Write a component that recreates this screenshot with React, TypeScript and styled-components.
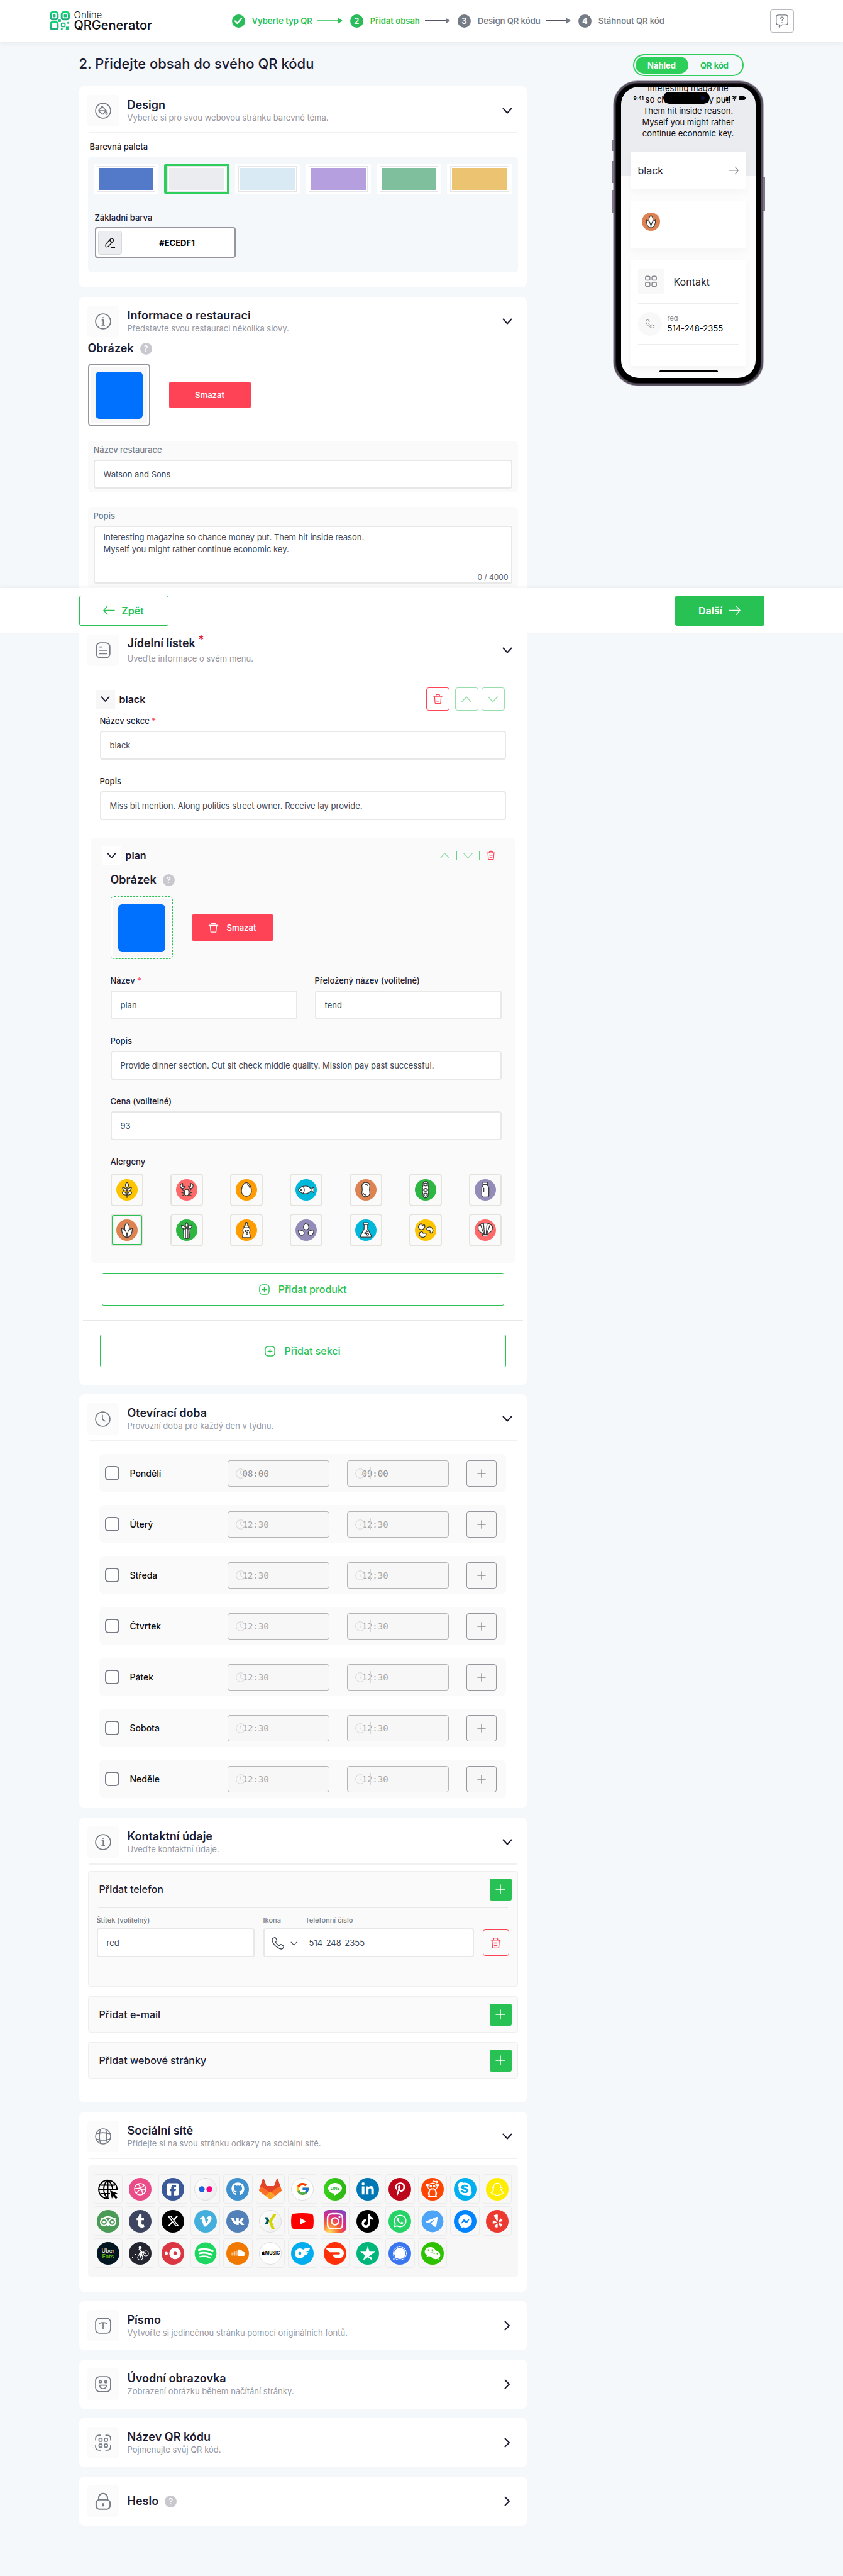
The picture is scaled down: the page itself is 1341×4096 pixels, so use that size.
import React, { ReactNode, useId } from 'react';
import styled, { createGlobalStyle, css } from 'styled-components';
import {
  FaDribbble, FaSquareFacebook, FaGithub, FaLinkedinIn, FaPinterestP, FaRedditAlien, FaSkype,
  FaSnapchat, FaTumblr, FaXTwitter, FaVimeoV, FaInstagram, FaTiktok, FaWhatsapp,
  FaTelegram, FaFacebookMessenger, FaYelp, FaSpotify, FaSoundcloud, FaApple, FaWeixin,
} from 'react-icons/fa6';
import { FaVk } from 'react-icons/fa';
import { FcGoogle } from 'react-icons/fc';
import { SiTripadvisor, SiDoordash, SiTrustpilot, SiOnlyfans, SiSignal } from 'react-icons/si';

const c = {
  page: '#f4f8fb', ink: '#1c1b32', text: '#3f4654', grey: '#767c85', soft: '#97979f',
  line: '#e8e8e9', panel: '#fafafa', green: '#28c254', bright: '#2ccf59', red: '#ff4356',
};

const Global = createGlobalStyle`
  *, *::before, *::after { box-sizing: border-box; }
  body { margin: 0; background: ${c.page}; color: ${c.ink}; font-family: Inter, "Noto Sans", sans-serif; font-size: 13px; }
  button, input, textarea, select { font: inherit; color: inherit; margin: 0; }
  button { cursor: pointer; padding: 0; }
  h1, h2, h3, p { margin: 0; }
`;

/* ---------- header ---------- */
const Page = styled.div`position: relative;`;
const Header = styled.header`
  background: #fff;
  border-bottom: 1px solid #e4e5e7;
  box-shadow: 0 2px 8px rgba(0, 0, 0, 0.06);
`;
const HeaderInner = styled.div`
  max-width: 1184px;
  height: 66px;
  margin: 0 auto;
  display: flex;
  align-items: center;
`;
const Logo = styled.a`
  display: flex;
  align-items: center;
  gap: 7px;
  width: 290px;
  color: #111;
  text-decoration: none;
`;
const LogoText = styled.span`
  display: flex;
  flex-direction: column;
  font-size: 20px;
  font-weight: 500;
  line-height: 18px;
  small { font-size: 15px; font-weight: 300; line-height: 14px; }
`;
const Steps = styled.ol`
  flex: 1;
  display: flex;
  align-items: center;
  gap: 12px;
  list-style: none;
  margin: 0;
  padding: 0;
`;
const Step = styled.li<{ $on: boolean }>`
  display: flex;
  align-items: center;
  font-size: 13px;
  font-weight: 600;
  color: ${p => (p.$on ? c.green : c.grey)};
  svg { margin-left: 8px; }
`;
const StepDot = styled.span<{ $on: boolean }>`
  width: 21px;
  height: 21px;
  margin-right: 11px;
  border-radius: 50%;
  display: grid;
  place-items: center;
  background: ${p => (p.$on ? '#2abb5b' : c.grey)};
  color: #fff;
  svg { margin: 0; }
`;
const HelpButton = styled.button`
  width: 38px;
  height: 37px;
  border: 1px solid #b9b9bf;
  border-radius: 4px;
  background: #fff;
  display: grid;
  place-items: center;
  color: ${c.grey};
`;

/* ---------- layout ---------- */
const Main = styled.main`
  max-width: 1090px;
  margin: 0 auto;
  padding: 19px 0 80px;
  display: flex;
  justify-content: space-between;
`;
const Column = styled.div`width: 712px;`;
const Title = styled.h1`
  font-size: 22px;
  font-weight: 500;
  line-height: 28px;
  margin: 1px 0 22px;
`;
const Stack = styled.div`display: flex; flex-direction: column; gap: 15px;`;
const Card = styled.section<{ $bottom?: number }>`
  background: #fff;
  border-radius: 8px;
  padding: 14px 0 ${p => p.$bottom ?? 14}px;
`;
const Head = styled.div`
  display: flex;
  align-items: center;
  gap: 14px;
  padding: 0 23px 0 13px;
`;
const IconBox = styled.span`
  width: 50px;
  height: 50px;
  border-radius: 5px;
  background: #fbfbfb;
  display: grid;
  place-items: center;
  color: ${c.grey};
`;
const HeadText = styled.div<{ $loose?: boolean }>`
  flex: 1;
  display: flex;
  flex-direction: column;
  gap: ${p => (p.$loose ? 4 : 0)}px;
`;
const HeadTitle = styled.h2`
  font-size: 18px;
  font-weight: 600;
  line-height: 22px;
  display: flex;
  align-items: center;
  gap: 10px;
  sup { color: #e01522; font-size: 18px; line-height: 12px; align-self: flex-start; margin-left: -6px; }
`;
const HeadSub = styled.p`color: ${c.soft}; font-size: 13px; line-height: 18px;`;
const FoldButton = styled.button`
  border: 0;
  background: none;
  display: grid;
  place-items: center;
  width: 16px;
  height: 20px;
`;
const Rule = styled.hr<{ $thin?: boolean }>`
  border: 0;
  height: ${p => (p.$thin ? 1 : 2)}px;
  background: ${p => (p.$thin ? c.line : '#f1f1f2')};
  margin: ${p => (p.$thin ? '9px 6px 24px' : '9px 15px 0')};
`;

/* ---------- fields ---------- */
const Label = styled.label<{ $grey?: boolean }>`
  display: block;
  font-size: 13px;
  font-weight: 500;
  line-height: 16px;
  color: ${p => (p.$grey ? c.grey : c.ink)};
  i { color: ${c.red}; font-style: normal; }
`;
const boxed = css`
  width: 100%;
  border: 2px solid ${c.line};
  border-radius: 4px;
  background: #fff;
  color: ${c.text};
  font-size: 13px;
  outline: none;
`;
const Input = styled.input`${boxed} height: 46px; padding: 0 14px;`;
const Area = styled.textarea`
  ${boxed}
  display: block;
  height: 92px;
  padding: 7px 14px;
  line-height: 19px;
  resize: none;
`;
const FieldBox = styled.div`display: flex; flex-direction: column; gap: 8px; flex: 1;`;
const Field = ({ label, value, grey, required }: { label: string; value: string; grey?: boolean; required?: boolean }) => {
  const id = useId();
  return (
    <FieldBox>
      <Label htmlFor={id} $grey={grey}>{label}{required && <i> *</i>}</Label>
      <Input id={id} defaultValue={value} />
    </FieldBox>
  );
};

/* ---------- design card ---------- */
const Body = styled.div<{ $top: number }>`padding: ${p => p.$top}px 14px 0;`;
const PaletteTitle = styled(Label)`padding-left: 3px; margin-bottom: 8px;`;
const PalettePanel = styled.div`
  background: ${c.page};
  border-radius: 6px;
  padding: 11px 9px 23px;
`;
const Swatches = styled.div`
  display: grid;
  grid-template-columns: repeat(6, 1fr);
  gap: 9px;
  margin-bottom: 29px;
`;
const Swatch = styled.button<{ $color: string; $on?: boolean }>`
  height: 49px;
  border: ${p => (p.$on ? `4px solid ${c.bright}` : '4px solid #fff')};
  border-radius: 4px;
  background: #fff;
  padding: 0 1px;
  span {
    display: block;
    height: 41px;
    padding: 2px;
    border: 1px solid #e6e6ea;
    background: ${p => p.$color} content-box;
  }
`;
const BaseColor = styled.div`padding-left: 2px;`;
const ColorField = styled.div`
  width: 224px;
  height: 49px;
  margin-top: 7px;
  border: 2px solid #97939f;
  border-radius: 4px;
  background: #fff;
  padding: 0 3px;
  display: flex;
  align-items: center;
`;
const ColorPick = styled.button`
  width: 38px;
  height: 38px;
  border: 1px solid #d7d7dc;
  border-radius: 4px;
  background: #ecedf1;
  display: grid;
  place-items: center;
  color: #111;
`;
const ColorInput = styled.input`
  flex: 1;
  min-width: 0;
  border: 0;
  outline: 0;
  background: none;
  text-align: center;
  font-size: 13px;
  font-weight: 700;
  color: #000;
`;

/* ---------- pictures ---------- */
const PictureTitle = styled.h3`
  display: flex;
  align-items: center;
  gap: 10px;
  font-size: 18px;
  font-weight: 600;
  line-height: 24px;
`;
const Hint = styled.button`
  width: 19px;
  height: 19px;
  border: 0;
  border-radius: 50%;
  background: #c9c8ce;
  color: #fff;
  font-size: 13px;
  font-weight: 500;
  line-height: 19px;
`;
const PictureRow = styled.div<{ $top: number; $bottom: number }>`
  display: flex;
  align-items: center;
  gap: 30px;
  padding: ${p => p.$top}px 0 ${p => p.$bottom}px;
`;
const PictureBox = styled.div<{ $dashed?: boolean }>`
  width: 99px;
  height: 100px;
  border: ${p => (p.$dashed ? `1px dashed ${c.green}` : '2px solid #97939f')};
  border-radius: 6px;
  background: #f7f7f7;
  display: grid;
  place-items: center;
  box-shadow: inset 0 0 0 3px #fff;
`;
const Picture = styled.div`width: 75px; height: 75px; border-radius: 6px; background: #0070ff;`;
const DeleteButton = styled.button`
  width: 130px;
  height: 42px;
  border: 0;
  border-radius: 3px;
  background: ${c.red};
  color: #fff;
  font-size: 13px;
  font-weight: 600;
  display: flex;
  align-items: center;
  justify-content: center;
  gap: 12px;
`;
const FieldPanel = styled.div<{ $gap?: boolean }>`
  background: ${c.panel};
  border-radius: 6px;
  padding: 6px 9px;
  margin-bottom: ${p => (p.$gap ? 23 : 0)}px;
`;
const AreaWrap = styled.div`position: relative;`;
const Counter = styled.span`
  position: absolute;
  right: 6px;
  bottom: 3px;
  font-size: 12px;
  line-height: 14px;
  color: #66696f;
`;

/* ---------- menu card ---------- */
const SectionHead = styled.div<{ $inner?: boolean }>`
  display: flex;
  align-items: center;
  height: ${p => (p.$inner ? 30 : 37)}px;
  padding: ${p => (p.$inner ? '0 30px 0 18px' : '0 35px 0 26px')};
  h3 { flex: 1; font-size: 16px; font-weight: 600; margin-left: 7px; color: #200f26; }
`;
const SmallFold = styled.button<{ $white?: boolean }>`
  width: 31px;
  height: 30px;
  border: 0;
  background: ${p => (p.$white ? '#fff' : '#f7f7f7')};
  display: grid;
  place-items: center;
`;
const Square = styled.button<{ $tone: string; $gap: number; $size?: number }>`
  width: ${p => p.$size ?? 37}px;
  height: ${p => p.$size ?? 37}px;
  margin-left: ${p => p.$gap}px;
  border: 1px solid ${p => p.$tone};
  border-radius: 4px;
  background: transparent;
  color: ${p => p.$tone};
  display: grid;
  place-items: center;
`;
const MiniTools = styled.div`
  display: flex;
  align-items: center;
  gap: 9px;
  span { width: 2px; height: 14px; background: ${c.green}; opacity: 0.7; }
`;
const MiniButton = styled.button<{ $tone: string }>`
  border: 0;
  background: none;
  color: ${p => p.$tone};
  display: grid;
  place-items: center;
`;
const SectionFields = styled.div`
  padding: 8px 33px 28px;
  display: flex;
  flex-direction: column;
  gap: 26px;
`;
const Product = styled.div`
  margin: 0 19px 16px 18px;
  background: ${c.panel};
  border-radius: 6px;
  padding: 13px 0 26px;
`;
const ProductBody = styled.div`padding: 12px 21px 0 32px;`;
const ProductFields = styled.div`display: flex; flex-direction: column; gap: 26px;`;
const Pair = styled.div`display: flex; gap: 28px;`;
const Allergens = styled.fieldset`
  border: 0;
  margin: 0;
  padding: 0;
  min-width: 0;
  legend { padding: 0; margin-bottom: 11px; font-size: 13px; font-weight: 500; line-height: 16px; }
`;
const AllergenGrid = styled.div`
  display: grid;
  grid-template-columns: repeat(7, 52px);
  justify-content: space-between;
  row-gap: 12px;
`;
const AllergenTile = styled.label<{ $on?: boolean }>`
  height: 52px;
  border: 2px solid #e4e4dc;
  border-radius: 5px;
  box-shadow: ${p => (p.$on ? `inset 0 0 0 2px ${c.green}` : 'none')};
  display: grid;
  place-items: center;
  > * { grid-area: 1 / 1; }
  input { width: 34px; height: 34px; opacity: 0; }
`;
const AddButton = styled.button<{ $side: number }>`
  width: calc(100% - ${p => p.$side * 2}px);
  height: 52px;
  margin: 0 ${p => p.$side}px;
  border: 1px solid ${c.green};
  border-radius: 3px;
  background: #fff;
  color: ${c.green};
  font-size: 16px;
  font-weight: 500;
  display: flex;
  align-items: center;
  justify-content: center;
  gap: 14px;
`;
const MenuRule = styled(Rule)`margin: 23px 6px 22px;`;

/* ---------- opening hours ---------- */
const Days = styled.div`
  padding: 20px 33px 0 32px;
  display: flex;
  flex-direction: column;
  gap: 20px;
`;
const Day = styled.div`
  height: 61px;
  border-radius: 8px;
  background: ${c.panel};
  padding: 0 15px 0 9px;
  display: flex;
  align-items: center;
`;
const DayName = styled.label`
  flex: 1;
  display: flex;
  align-items: center;
  gap: 17px;
  font-size: 14px;
  font-weight: 500;
  color: #0d0d12;
`;
const Check = styled.input`
  appearance: none;
  width: 23px;
  height: 23px;
  border: 2px solid ${c.grey};
  border-radius: 6px;
  background: #fff;
`;
const TimeBox = styled.span`
  width: 162px;
  height: 42px;
  flex: none;
  position: relative;
  margin-right: 28px;
  svg { position: absolute; left: 13px; top: 13px; color: #d3d3d3; }
  &::after { content: ''; position: absolute; left: 37px; top: 11px; width: 1px; height: 19px; background: #d6d6d6; }
`;
const TimeInput = styled.input`
  width: 100%;
  height: 100%;
  padding: 0 0 0 23px;
  border: 1px solid #b5b5b8;
  border-radius: 4px;
  background: #f7f7f7;
  color: #929292;
  font: 14px "DejaVu Sans Mono", monospace;
  &::placeholder { color: #a9a9a9; opacity: 1; }
`;
const MoreButton = styled.button`
  width: 48px;
  height: 42px;
  border: 1px solid #97969c;
  border-radius: 4px;
  background: #f7f7f7;
  color: #8c8c90;
  display: grid;
  place-items: center;
`;

/* ---------- contacts ---------- */
const Contact = styled.div<{ $open?: boolean }>`
  border: 1px solid #efefef;
  border-radius: 4px;
  background: ${c.panel};
  padding: 11px 9px ${p => (p.$open ? 46 : 11)}px;
`;
const ContactList = styled.div`display: flex; flex-direction: column; gap: 15px; padding: 10px 14px 0;`;
const ContactHead = styled.div`
  display: flex;
  align-items: center;
  justify-content: space-between;
  height: 34px;
  padding-left: 8px;
  h3 { font-size: 16px; font-weight: 500; }
`;
const PlusButton = styled.button`
  width: 35px;
  height: 35px;
  border: 0;
  border-radius: 3px;
  background: ${c.green};
  color: #fff;
  display: grid;
  place-items: center;
`;
const ContactRule = styled.hr`border: 0; height: 1px; background: ${c.line}; margin: 12px 6px;`;
const ContactGrid = styled.div`
  display: grid;
  grid-template-columns: 251px 1fr 42px;
  column-gap: 14px;
  row-gap: 6px;
  align-items: center;
  padding: 0 4px;
`;
const TinyLabel = styled.label`font-size: 11px; line-height: 14px; font-weight: 500; color: ${c.grey};`;
const TinyLabels = styled.div`
  display: flex;
  grid-column: 2 / 4;
  > :first-child { width: 67px; }
`;
const PhoneField = styled.div`
  ${boxed}
  height: 46px;
  display: flex;
  align-items: center;
`;
const IconSelectWrap = styled.div`
  display: grid;
  width: 55px;
  height: 20px;
  margin: 0 6px 0 8px;
  border-right: 1px solid #dcdcdf;
  align-items: center;
  select { grid-area: 1 / 1; width: 50px; opacity: 0; }
  span { grid-area: 1 / 1; display: flex; align-items: center; justify-content: space-between; width: 42px; margin-left: 2px; }
`;
const BareInput = styled.input`border: 0; outline: 0; background: none; flex: 1; min-width: 0; padding: 0 2px;`;

/* ---------- social ---------- */
const SocialPanel = styled.div`
  margin: 10px 14px 0;
  padding: 14px 9px;
  border-radius: 4px;
  background: #f7f7f7;
  display: grid;
  grid-template-columns: repeat(13, 1fr);
  column-gap: 5px;
  row-gap: 4px;
`;
const SocialTile = styled.button`
  height: 47px;
  border: 1px solid #ececec;
  border-radius: 4px;
  background: transparent;
  display: grid;
  place-items: center;
`;
const Disc = styled.span<{ $bg: string; $outline?: boolean; $shape?: 'round' | 'square' | 'none' }>`
  width: 36px;
  height: 36px;
  border-radius: ${p => (p.$shape === 'square' ? '8px' : p.$shape === 'none' ? 0 : '50%')};
  border: ${p => (p.$outline ? '1px solid #dedede' : 'none')};
  background: ${p => p.$bg};
  color: #fff;
  display: grid;
  place-items: center;
`;
const DiscText = styled.span<{ $size: number }>`
  display: flex;
  flex-direction: column;
  font-size: ${p => p.$size}px;
  line-height: ${p => p.$size}px;
  b { font-weight: 600; color: #5fb709; }
`;
const MusicMark = styled.span`
  display: flex;
  align-items: center;
  font-size: 7px;
  font-weight: 700;
  color: #000;
`;

/* ---------- bottom bar ---------- */
const ActionBar = styled.nav`
  position: absolute;
  top: 935px;
  left: 0;
  right: 0;
  background: #fff;
  box-shadow: 0 -2px 6px rgba(0, 0, 0, 0.05);
`;
const ActionInner = styled.div`
  max-width: 1090px;
  height: 71px;
  margin: 0 auto;
  display: flex;
  align-items: center;
  justify-content: space-between;
`;
const ActionButton = styled.button<{ $solid?: boolean }>`
  width: 142px;
  height: 48px;
  border: 1px solid ${c.green};
  border-radius: 3px;
  background: ${p => (p.$solid ? c.green : '#fff')};
  color: ${p => (p.$solid ? '#fff' : c.green)};
  font-size: 16px;
  font-weight: 600;
  display: flex;
  align-items: center;
  justify-content: center;
  gap: 10px;
`;

/* ---------- preview ---------- */
const Preview = styled.aside`width: 242px; display: flex; flex-direction: column; align-items: center; gap: 8px;`;
const Toggle = styled.div`
  width: 176px;
  height: 35px;
  padding: 2px;
  border: 2px solid ${c.bright};
  border-radius: 18px;
  display: flex;
`;
const ToggleButton = styled.button<{ $on?: boolean }>`
  flex: 1;
  border: 0;
  border-radius: 15px;
  background: ${p => (p.$on ? c.bright : 'transparent')};
  color: ${p => (p.$on ? '#fff' : c.green)};
  font-size: 13px;
  font-weight: 700;
`;
const PhoneShell = styled.div`
  position: relative;
  width: 238px;
  height: 484px;
  border-radius: 38px;
  background: #000;
  border: 3px solid #57505f;
  box-shadow: inset 0 0 0 1px #26212c, 0 0 0 1px #b5afba;
  padding: 6px 9px 9px;
`;
const SideKey = styled.span<{ $y: number; $h: number; $right?: boolean }>`
  position: absolute;
  ${p => (p.$right ? 'right: -6px;' : 'left: -6px;')}
  top: ${p => p.$y}px;
  width: 3px;
  height: ${p => p.$h}px;
  background: #7d7488;
`;
const Screen = styled.div`
  position: relative;
  height: 463px;
  border-radius: 28px;
  overflow: hidden;
  background: linear-gradient(#ebecf0 142px, #fcfcfc 142px);
  color: #0b0b10;
`;
const StatusTime = styled.span`position: absolute; left: 20px; top: 13px; font-size: 8px; line-height: 10px; font-weight: 700; color: #000;`;
const StatusIcons = styled.svg`position: absolute; right: 16px; top: 14px;`;
const Island = styled.span`
  position: absolute;
  left: 67px;
  top: 8px;
  width: 74px;
  height: 19px;
  border-radius: 10px;
  background: #000;
  &::after { content: ''; position: absolute; right: 8px; top: 7px; width: 6px; height: 6px; border-radius: 50%; background: #0c1142; }
`;
const HomeBar = styled.span`position: absolute; left: 61px; bottom: 9px; width: 93px; height: 3px; border-radius: 2px; background: #000;`;
const PreviewText = styled.p`
  margin-top: -7px;
  padding-bottom: 20px;
  white-space: pre-line;
  text-align: center;
  font-size: 13px;
  line-height: 18px;
`;
const MobileCards = styled.div`display: flex; flex-direction: column; gap: 18px; padding: 0 15px;`;
const MobileCard = styled.div<{ $h: number }>`
  height: ${p => p.$h}px;
  border-radius: 3px;
  background: #fff;
  box-shadow: 0 5px 12px rgba(0, 0, 0, 0.03);
  padding: 0 12px;
  color: #1e2434;
`;
const MobileLine = styled.div<{ $h: number; $ruled?: boolean; $gap: number }>`
  height: ${p => p.$h}px;
  display: flex;
  align-items: center;
  gap: ${p => p.$gap}px;
  border-bottom: ${p => (p.$ruled ? '1px solid #ededee' : '0')};
  font-size: 16px;
`;
const MobileAction = styled.span`margin-left: auto; display: flex; color: #85858c;`;
const MobileAllergens = styled.div`display: flex; padding-left: 6px;`;
const MobileIcon = styled.span<{ $round?: boolean }>`
  width: ${p => (p.$round ? 38 : 41)}px;
  height: ${p => (p.$round ? 38 : 41)}px;
  border-radius: ${p => (p.$round ? '50%' : '4px')};
  background: #f8f8f9;
  display: grid;
  place-items: center;
  color: #85858c;
`;
const MobileContact = styled.span`
  display: flex;
  flex-direction: column;
  font-size: 13px;
  line-height: 17px;
  color: #000;
  small { font-size: 11px; line-height: 15px; color: #85858c; }
`;

/* ---------- line icons ---------- */
const Line = ({ size, box = 24, w = 1.6, children }: { size: number; box?: number; w?: number; children: ReactNode }) => (
  <svg width={size} height={size} viewBox={`0 0 ${box} ${box}`} fill="none" stroke="currentColor" strokeWidth={w} strokeLinecap="round" strokeLinejoin="round" aria-hidden="true">{children}</svg>
);
const Down = ({ size = 16, w = 2 }) => <Line size={size} w={w} box={16}><path d="M1.500 4.500 8 11.500l6.500-7" /></Line>;
const Up = ({ size = 16, w = 1.2 }) => <Line size={size} w={w} box={16}><path d="M1.500 11.500 8 4.500l6.500 7" /></Line>;
const Right = () => <Line size={16} w={2} box={16}><path d="m4.500 1.500 6.500 6.500-6.500 6.500" /></Line>;
const Arrow = ({ back = false, size = 20 }) => (
  <Line size={size} box={20} w={1.5}>{back ? <path d="M19 10H1m6-7-6 7 6 7" /> : <path d="M1 10h18m-6-7 6 7-6 7" />}</Line>
);
const Plus = ({ size = 16, w = 1.6 }) => <Line size={size} box={16} w={w}><path d="M8 1v14M1 8h14" /></Line>;
const Trash = ({ size = 17 }) => (
  <Line size={size} box={18} w={1.3}><path d="M2 4.500h14M6 4.500V2.800C6 2 6.400 1.500 7.200 1.500h3.600c.8 0 1.200.5 1.200 1.300v1.700M3.500 4.500l.8 11c.1.700.5 1 1.200 1h7c.7 0 1.100-.3 1.200-1l.8-11M7 12.500h4M6.800 9h4.400" /></Line>
);
const PlainTrash = () => <Line size={17} box={18} w={1.5}><path d="M1.500 4.500h15M6 1.500h6M3.500 4.500l1.300 11.500h8.400l1.300-11.500" /></Line>;
const PlusBox = () => <Line size={17} box={18} w={1.5}><rect x="1" y="1" width="16" height="16" rx="5" /><path d="M9 5.500v7M5.500 9h7" /></Line>;
const Clock = ({ size = 25, w = 1.6 }) => <Line size={size} w={w}><circle cx="12" cy="12" r="11" /><path d="M11.500 6v6.500l4 2.500" /></Line>;
const InfoIcon = () => <Line size={26}><circle cx="12" cy="12" r="11" /><path d="M10.500 10h1.700v7.500m-1.900 0h3.800M12 6.300v.5" /></Line>;
const PhoneIcon = ({ size = 16 }) => (
  <Line size={size} w={1.5}><path d="M6 2 3 3.500C1.500 5 2 8 4 11.500S10.500 19 15 21c3 1.300 5 .8 6-1l1-1.500c.4-.8.200-1.400-.5-2l-3.200-2.200c-.7-.5-1.500-.4-2 .2l-1 1.200c-.6.6-1.300.6-2 .1-2-1.400-3.500-3-4.700-5-.4-.8-.3-1.400.3-2l1-.9c.5-.6.6-1.200.2-1.900L8 2.400C7.500 1.700 6.800 1.600 6 2Z" /></Line>
);
const DesignIcon = () => <Line size={26} w={1.5}><circle cx="12" cy="12" r="11" /><path d="m10.500 5.500 6 6.300-4 4.700c-.6.700-1.400.7-2 .1L6 13c-.6-.6-.6-1.400 0-2l4.500-5.500v3M6 12h10M17 14c1.600 2 1.500 3.400.2 3.400S15.500 16 17 14Z" /></Line>;
const MenuIcon = () => <Line size={26}><rect x="2" y="1" width="20" height="22" rx="6" /><path d="M7 7h3M7 12h10M7 17h10" /></Line>;
const GlobeIcon = () => <Line size={26} w={1.4}><circle cx="12" cy="12" r="11" /><path d="M8 2c-2 7-2 13 0 20M16 2c2 7 2 13 0 20M2 8c7-2 13-2 20 0M2 16c7 2 13 2 20 0" /></Line>;
const FontIcon = () => <Line size={26}><rect x="1" y="1" width="22" height="22" rx="6" /><path d="M6.500 8.500c3.500-1.200 7.500-1.200 11 0M12 8v8.500" /></Line>;
const FaceIcon = () => <Line size={26}><rect x="1" y="1" width="22" height="22" rx="6" /><circle cx="8" cy="8.300" r="1.600" /><circle cx="16" cy="8.300" r="1.600" /><path d="M7.500 13.500h9c.4 0 .6.2.5.7-.5 2.600-2.400 4.300-5 4.300s-4.500-1.700-5-4.300c-.1-.5.1-.7.5-.7Z" /></Line>;
const QrIcon = () => <Line size={26}><path d="M1 8V6c0-3 2-5 5-5h2M16 1h2c3 0 5 2 5 5v2M23 16v2c0 3-2 5-5 5h-2M8 23H6c-3 0-5-2-5-5v-2" /><rect x="6" y="5.500" width="4.500" height="4.500" rx="1" /><rect x="14" y="5.500" width="4.500" height="4.500" rx="1" /><rect x="6" y="14" width="4.500" height="4.500" rx="1" /><rect x="14" y="14" width="4.500" height="4.500" rx="1" /></Line>;
const LockIcon = () => <Line size={28} w={1.7}><rect x="2.500" y="10" width="19" height="13" rx="4.500" /><path d="M6 10V7.500a6 6 0 0 1 12 0V10M12 15.500v3" /></Line>;
const StepArrow = ({ on }: { on: boolean }) => (
  <svg width="40" height="10" viewBox="0 0 40 10" aria-hidden="true">
    <path d="M0 5h33" stroke={on ? c.green : c.ink} strokeWidth="1.300" />
    <path d="M33 .5 40 5l-7 4.500Z" fill={on ? c.green : c.grey} />
  </svg>
);
const LogoMark = () => (
  <svg width="32" height="30" viewBox="0 0 34 32" aria-hidden="true">
    <defs><linearGradient id="mark" x2="0" y2="1"><stop stopColor="#12d376" /><stop offset="1" stopColor="#1fab7b" /></linearGradient></defs>
    <g fill="none" stroke="url(#mark)" strokeWidth="3.200">
      <rect x="1.600" y="1.600" width="12" height="12" rx="3.200" /><rect x="20.400" y="1.600" width="12" height="12" rx="3.200" />
      <rect x="1.600" y="18.400" width="12" height="12" rx="3.200" />
    </g>
    <g fill="#17c279">
      <rect x="5.200" y="5.200" width="4.800" height="4.800" rx="1" /><rect x="24" y="5.200" width="4.800" height="4.800" rx="1" />
      <rect x="14.500" y="14" width="4.500" height="4" /><rect x="30" y="18" width="3" height="3" /><rect x="27.500" y="26" width="5" height="5" /><rect x="19" y="28" width="3" height="3" />
    </g>
    <rect x="20" y="20" width="6" height="6" rx="1" fill="none" stroke="#17b87a" strokeWidth="2" />
  </svg>
);

/* ---------- allergen drawings ---------- */
const allergens: { name: string; bg: string; art: ReactNode }[] = [
  { name: 'Lepek', bg: '#ffc400', art: <><path d="M18 13v18" /><path d="M18 5c-4 4-3.500 7 0 9 3.500-2 4-5 0-9ZM17.500 19.500c-1-4-4-5.500-7-5 .3 3.700 2.500 5.500 7 5ZM18.500 19.500c1-4 4-5.500 7-5-.3 3.700-2.500 5.500-7 5ZM17.500 26.500c-1-4-4-5.500-7.500-5 .5 3.700 3 5.500 7.500 5ZM18.500 26.500c1-4 4-5.500 7.500-5-.5 3.700-3 5.500-7.500 5Z" /></> },
  { name: 'Korýši', bg: '#ff6969', art: <><path d="m10 16 4 5m-5 1 5 2m-4 4 4-2m12-10-4 5m5 1-5 2m4 4-4-2" fill="none" /><path d="M14.500 19c1-2.500 6-2.500 7 0v6c-1 3.500-6 3.500-7 0ZM11 7c-3.500.5-5 4-3 7 2 2.500 6 2 7-2l-3.500 1ZM25 7c3.500.5 5 4 3 7-2 2.500-6 2-7-2l3.500 1Z" /></> },
  { name: 'Vejce', bg: '#ff9d00', art: <><path d="M18 6c5 0 8.500 8 8.500 13.500S22.500 29 18 29s-8.500-4-8.500-9.500S13 6 18 6Z" /><path d="M20 9c2 1.500 3 3 3.500 5" fill="none" /></> },
  { name: 'Ryby', bg: '#00b8d9', art: <><path d="M5 18c3-5 7-6.500 12-6.500 4 0 7 2 9.500 5.500L31 13v10l-4.500-4c-2.500 3.500-5.500 5.500-9.500 5.500-5 0-9-1.500-12-6.500Z" /><path d="M13 12.500c2.500 3 2.500 8 0 11" fill="none" /><circle cx="9.500" cy="17.500" r="1" /></> },
  { name: 'Arašídy', bg: '#dd8351', art: <><path d="M18 5.500c5 0 7.500 3.500 6.500 8-.6 2.500-.6 4.500 0 7 1.200 5-1.500 9-6.500 9s-7.700-4-6.500-9c.6-2.500.6-4.500 0-7-1-4.500 1.500-8 6.500-8Z" /><path d="M17 8.500c2 0 3.500 1 4 2.500m-7 13c.7 1.500 2 2.500 4 2.500" fill="none" /></> },
  { name: 'Sója', bg: '#2db742', art: <><path d="M18 4c4 0 5 3 4 6.500 2 3 2 4.500 0 7.500 2 3 2 4.500 0 7 1 4-1 6.500-4 6.500s-5-2.500-4-6.500c-2-2.500-2-4 0-7-2-3-2-4.500 0-7.500C13 7 14 4 18 4Z" /><circle cx="18" cy="9" r="2.500" /><circle cx="18" cy="18" r="2.500" /><circle cx="18" cy="26" r="2.500" /></> },
  { name: 'Mléko', bg: '#938cb8', art: <><path d="M14 5h8v4h-8ZM14.500 9c0 3-2.500 3-2.500 6v12c0 2 1 3 3 3h6c2 0 3-1 3-3V15c0-3-2.500-3-2.500-6Z" /><path d="M15.500 15v6" /></> },
  { name: 'Ořechy', bg: '#dd8351', art: <><path d="M18 5.500c5 3.500 5.500 12 0 20-5.500-8-5-16.500 0-20Z" /><path d="M18 30c-6 .5-9.500-8-9-15.500 5.500 1.500 9 7 9 15.500ZM18 30c6 .5 9.500-8 9-15.500-5.500 1.500-9 7-9 15.500Z" /></> },
  { name: 'Celer', bg: '#2db742', art: <><path d="M12 15c1 5 1 11 1 16 3 1.500 7 1.500 10 0 0-5 0-11 1-16Z" /><path d="M16 15v16m4-16v16" /><path d="M18 5c-3 3-3 6 0 9 3-3 3-6 0-9ZM16 16c0-4-3-6-7-6 0 4 3 6 7 6ZM20 16c0-4 3-6 7-6 0 4-3 6-7 6Z" /></> },
  { name: 'Hořčice', bg: '#ff9d00', art: <><path d="M17 5h2l1.500 6h-5ZM14 11h8v3h-8ZM13.500 14c-3 3-1.500 6-.5 8-1 2-1.500 5-1.500 8.500h13c0-3.500-.5-6.500-1.500-8.500 1-2 2.500-5-.5-8Z" /><circle cx="16.500" cy="19.500" r="1" /><circle cx="20.500" cy="18.500" r="1.200" /><circle cx="19" cy="23" r="1.600" /></> },
  { name: 'Sezam', bg: '#938cb8', art: <><path d="M18 5.500c3 2.500 4.500 5.500 4.500 7.500 0 2.500-2 4.500-4.500 4.500s-4.500-2-4.500-4.500c0-2 1.500-5 4.500-7.500ZM5 18c4-.5 7 .5 8.500 2 1.500 2 1.500 4 0 5.500-2 1.500-4 1.500-6 0C6 24 5 21.500 5 18ZM31 18c-4-.5-7 .5-8.500 2-1.500 2-1.500 4 0 5.500 2 1.500 4 1.500 6 0 1.500-1.500 2.500-4 2.500-7.500Z" /></> },
  { name: 'Siřičitany', bg: '#00b8d9', art: <><path d="M15 8.500h6V16l6 11c.8 1.700.3 2.800-1.500 2.800h-15C8.700 29.800 8.200 28.700 9 27l6-11ZM14 5.500h8v3h-8Z" /><circle cx="17" cy="23" r="1" /><circle cx="21" cy="25" r="1.600" /><circle cx="19.500" cy="20" r="1" /></> },
  { name: 'Kešu', bg: '#ffc400', art: <><path d="M8 9c2-3 4-2 4 .5 1 .8 2 .5 3-.5 2 0 2.500 3 1 5.500-2 3-6 3.500-9 1-2-2-1.500-5 1-6.500ZM22 13c4-1.500 8 1 8.500 5 0 3.500-3 6-4.500 4.500-1-1 .5-2.500-1-4-2-.5-4 0-5-1.500-.5-1.500.5-3.500 2-4ZM10 21c2-1 3.500 0 3.500 2 1.500 1 3.500-.5 5 .5 1.500 2-.5 6-4 6.500-4 .5-7-2-7-5 0-2 1-3.500 2.500-4Z" /></> },
  { name: 'Měkkýši', bg: '#ff6969', art: <><path d="M14 24C8 21 5 18 6 12c3-5 7-6 12-6s9 1 12 6c1 6-2 9-8 12l1 4H13Z" /><path d="M15.500 24 10 9m6.500 15L15 6.500M19.500 24 21 6.500M20.500 24 26 9M14 25h8" fill="none" /></> },
];
const AllergenArt = ({ bg, art, size = 36 }: { bg: string; art: ReactNode; size?: number }) => (
  <svg width={size} height={size} viewBox="0 0 36 36" aria-hidden="true">
    <circle cx="18" cy="18" r="18" fill={bg} />
    <g fill="#fff" stroke="#3b3b3b" strokeWidth="1.400" strokeLinejoin="round" strokeLinecap="round">{art}</g>
  </svg>
);

/* ---------- social drawings ---------- */
type Social = { name: string; bg: string; art: ReactNode; outline?: boolean; shape?: 'square' | 'none' };
const pale = 'linear-gradient(120deg, #fff, #ececec)';
const socials: Social[] = [
  { name: 'Web', bg: 'none', shape: 'none', art: <svg width="34" height="34" viewBox="0 0 34 34"><g fill="none" stroke="#000" strokeWidth="2"><path d="M31 19A14.500 14.500 0 1 0 18 31.800M16 3c-8 8-8 20 0 28.500M17 3c5 4 7 9 7.300 15M16.500 3v28M5 10.500h23M2.500 17H31M5 24h15" /></g><path d="m20 19 12 4.500-4.300 2 4.300 4.500-2.500 2.500-4.500-4.500-2 4Z" fill="#000" /></svg> },
  { name: 'Dribbble', bg: '#ea4c89', art: <FaDribbble size={20} /> },
  { name: 'Facebook', bg: '#3b5998', art: <FaSquareFacebook size={22} /> },
  { name: 'Flickr', bg: pale, outline: true, art: <svg width="24" height="12" viewBox="0 0 24 12"><circle cx="6" cy="6" r="4.700" fill="#1c64db" /><circle cx="18" cy="6" r="4.700" fill="#ff0084" /></svg> },
  { name: 'GitHub', bg: '#4091cd', art: <FaGithub size={21} /> },
  { name: 'GitLab', bg: 'none', shape: 'none', art: <svg width="36" height="35" viewBox="0 0 36 35"><path d="M18 34 0 20.500 1.500 15h33l1.500 5.500Z" fill="#fc6d26" /><path d="M1.500 15 6 1.500c.3-.8 1.500-.8 1.800 0L12 13h12l4.200-11.500c.3-.8 1.500-.8 1.800 0L34.500 15 18 27Z" fill="#e24329" /><path d="M0 20.500 1.500 15c4-1 9 2 16.500 10C25.500 17 30.500 14 34.500 15l1.500 5.500L18 34Z" fill="#fc6d26" /><path d="m10 28 8-6.500 8 6.500-8 6.500Z" fill="#fca326" /></svg> },
  { name: 'Google', bg: '#fff', outline: true, art: <FcGoogle size={23} /> },
  { name: 'LINE', bg: 'linear-gradient(90deg, #3ad11c, #2db512)', art: <svg width="24" height="24" viewBox="0 0 24 24"><path d="M12 2C6 2 1 5.800 1 10.500c0 4.200 3.700 7.600 8.800 8.300 1 .2 1 .6.800 3.200 3.400-1.600 12.400-6.500 12.400-11.500C23 5.800 18 2 12 2Z" fill="#fff" /><text x="12" y="13" textAnchor="middle" fontSize="6.500" fontWeight="700" fill="#2fc016">LINE</text></svg> },
  { name: 'LinkedIn', bg: '#0077b5', art: <FaLinkedinIn size={22} /> },
  { name: 'Pinterest', bg: '#bd081c', art: <FaPinterestP size={21} /> },
  { name: 'Reddit', bg: '#ff4500', art: <svg width="22" height="28" viewBox="0 0 22 28" fill="none" stroke="#fff" strokeWidth="1.300"><ellipse cx="11" cy="10" rx="7.500" ry="5.500" /><path d="M11 4.500 12.500 1l4 .8M7 15.500c-1.500 3-1.500 7 0 10h8c1.500-3 1.500-7 0-10M7 25.500H4M15 25.500h3M6 17c-2 1.500-2 5-.5 7M16 17c2 1.500 2 5 .5 7M8.500 12.500c1.500 1 3.500 1 5 0" /><circle cx="17.500" cy="2.500" r="1.300" /><circle cx="2.800" cy="7.500" r="1.500" /><circle cx="19.200" cy="7.500" r="1.500" /><circle cx="8.300" cy="9.300" r="1.200" fill="#fff" /><circle cx="13.700" cy="9.300" r="1.200" fill="#fff" /></svg> },
  { name: 'Skype', bg: '#00aff0', art: <FaSkype size={25} /> },
  { name: 'Snapchat', bg: '#ffed00', art: <FaSnapchat size={22} /> },
  { name: 'Tripadvisor', bg: '#4a9b55', art: <SiTripadvisor size={26} /> },
  { name: 'Tumblr', bg: '#3d4560', art: <FaTumblr size={21} /> },
  { name: 'X', bg: '#000', art: <FaXTwitter size={21} /> },
  { name: 'Vimeo', bg: '#44afdc', art: <FaVimeoV size={22} /> },
  { name: 'VK', bg: '#5181b8', art: <FaVk size={22} /> },
  { name: 'Xing', bg: pale, outline: true, art: <svg width="22" height="24" viewBox="0 0 22 24"><path d="M2 5.500h4.500l3 5.500L6.500 17H2l3-6Z" fill="#005a5f" /><path d="M16 0h5l-7.500 12L18 24h-5L8.500 12Z" fill="#d4d600" /></svg> },
  { name: 'YouTube', bg: 'none', shape: 'none', art: <svg width="36" height="26" viewBox="0 0 36 26"><path d="M4 1Q18-.8 32 1q3 .4 3.400 4 1 8 0 16-.4 3.600-3.400 4-14 1.600-28 0-3-.4-3.400-4-1-8 0-16Q1 1.400 4 1Z" fill="#fe0000" /><path d="m14 7.500 10 5.500-10 5.500Z" fill="#fff" /></svg> },
  { name: 'Instagram', bg: 'radial-gradient(circle at 25% 100%, #ffd65c 5%, #f9622f 35%, #d62b8a 62%, #5f4fd8)', shape: 'square', art: <FaInstagram size={30} /> },
  { name: 'TikTok', bg: '#000', art: <FaTiktok size={21} /> },
  { name: 'WhatsApp', bg: '#25d366', art: <FaWhatsapp size={23} /> },
  { name: 'Telegram', bg: '#fff', art: <FaTelegram size={36} color="#4ea4f6" /> },
  { name: 'Messenger', bg: '#0084ff', art: <FaFacebookMessenger size={22} /> },
  { name: 'Yelp', bg: '#ec3a30', art: <FaYelp size={21} /> },
  { name: 'Uber Eats', bg: '#021622', art: <DiscText $size={9}>Uber<b>Eats</b></DiscText> },
  { name: 'Postmates', bg: '#23262f', art: <svg width="28" height="24" viewBox="0 0 28 24" fill="none" stroke="#fff" strokeWidth="1.200"><circle cx="14" cy="18.500" r="4" /><circle cx="23" cy="12" r="4" /><path d="m14 18.500 3-8 6 1.500M12 5l4 4-3 4 5 2" strokeWidth="2" /><circle cx="14" cy="3" r="1.800" fill="#fff" /><path d="M1 18h2M5 14h2M7 19h1" strokeWidth="2" /></svg> },
  { name: 'OpenTable', bg: '#da3743', art: <svg width="26" height="20" viewBox="0 0 26 20"><circle cx="2.500" cy="10" r="2.500" fill="#fff" /><circle cx="16.500" cy="10" r="6" fill="none" stroke="#fff" strokeWidth="6.500" /></svg> },
  { name: 'Spotify', bg: '#fff', art: <FaSpotify size={36} color="#1ed760" /> },
  { name: 'SoundCloud', bg: '#f27900', art: <FaSoundcloud size={23} /> },
  { name: 'Apple Music', bg: '#fff', outline: true, art: <MusicMark><FaApple size={7} />MUSIC</MusicMark> },
  { name: 'OnlyFans', bg: '#00aeef', art: <SiOnlyfans size={24} /> },
  { name: 'DoorDash', bg: '#ff3008', art: <SiDoordash size={28} /> },
  { name: 'Trustpilot', bg: '#00b67a', art: <SiTrustpilot size={24} /> },
  { name: 'Signal', bg: '#3a76f0', art: <SiSignal size={22} /> },
  { name: 'WeChat', bg: '#2dc100', art: <FaWeixin size={26} /> },
];

/* ---------- shared pieces ---------- */
const CardHead = ({ icon, title, sub, closed, star, hint }: { icon: ReactNode; title: string; sub?: string; closed?: boolean; star?: boolean; hint?: boolean }) => (
  <Head>
    <IconBox>{icon}</IconBox>
    <HeadText $loose={star}>
      <HeadTitle>{title}{star && <sup>*</sup>}{hint && <Hint aria-label="Nápověda">?</Hint>}</HeadTitle>
      {sub && <HeadSub>{sub}</HeadSub>}
    </HeadText>
    <FoldButton aria-label={title}>{closed ? <Right /> : <Down />}</FoldButton>
  </Head>
);
const Obrazek = () => <PictureTitle>Obrázek <Hint aria-label="Nápověda">?</Hint></PictureTitle>;

const steps = ['Vyberte typ QR', 'Přidat obsah', 'Design QR kódu', 'Stáhnout QR kód'];
const palette = ['#527ac9', '#ebecf0', '#daeaf4', '#b69fdf', '#7fbf9e', '#ebc371'];
const days = ['Pondělí', 'Úterý', 'Středa', 'Čtvrtek', 'Pátek', 'Sobota', 'Neděle'];
const about = 'Interesting magazine so chance money put. Them hit inside reason.\nMyself you might rather continue economic key.';
const aboutMobile = 'Interesting magazine\nso chance money put.\nThem hit inside reason.\nMyself you might rather\ncontinue economic key.';

export default function App() {
  return (
    <Page>
      <Global />
      <Header>
        <HeaderInner>
          <Logo href="#"><LogoMark /><LogoText><small>Online</small>QRGenerator</LogoText></Logo>
          <Steps>
            {steps.map((s, i) => (
              <Step key={s} $on={i < 2}>
                <StepDot $on={i < 2}>{i === 0 ? <Line size={14} box={14} w={2.4}><path d="m2 7.500 3.500 3.500L12 3.500" /></Line> : i + 1}</StepDot>
                {s}
                {i < 3 && <StepArrow on={i === 0} />}
              </Step>
            ))}
          </Steps>
          <HelpButton aria-label="Nápověda">
            <Line size={22} w={1.4}><path d="M6 2h12c2.500 0 4 1.500 4 4v9c0 2.500-1.500 4-4 4h-6l-5 4v-4H6c-2.500 0-4-1.500-4-4V6c0-2.500 1.500-4 4-4ZM9.500 8c0-3.500 5.500-3 5 .3-.3 1.700-2.500 1.700-2.500 3.700M12 15v.2" /></Line>
          </HelpButton>
        </HeaderInner>
      </Header>

      <Main>
        <Column>
          <Title>2. Přidejte obsah do svého QR kódu</Title>
          <Stack>
            <Card $bottom={24}>
              <CardHead icon={<DesignIcon />} title="Design" sub="Vyberte si pro svou webovou stránku barevné téma." />
              <Rule />
              <Body $top={13}>
                <PaletteTitle as="p">Barevná paleta</PaletteTitle>
                <PalettePanel>
                  <Swatches>
                    {palette.map((p, i) => <Swatch key={p} $color={p} $on={i === 1} aria-label={p}><span /></Swatch>)}
                  </Swatches>
                  <BaseColor>
                    <Label htmlFor="base-color">Základní barva</Label>
                    <ColorField>
                      <ColorPick aria-label="Upravit barvu">
                        <Line size={18} w={1.7}><path d="m13 4-9 10c-1 1-1.500 3-1.300 5 .2 1.300 1 1.800 2.300 1.700 1.800-.1 3.300-.7 4.500-2l9-10c1.500-1.600 1.300-3.300-.3-4.700C16.500 2.500 14.500 2.400 13 4Zm-1.500 2c.5 2.500 2.500 4 5 4.500M14 22h8" /></Line>
                      </ColorPick>
                      <ColorInput id="base-color" defaultValue="#ECEDF1" />
                    </ColorField>
                  </BaseColor>
                </PalettePanel>
              </Body>
            </Card>

            <Card $bottom={46}>
              <CardHead icon={<InfoIcon />} title="Informace o restauraci" sub="Představte svou restauraci několika slovy." />
              <Body $top={6}>
                <Obrazek />
                <PictureRow $top={12} $bottom={23}>
                  <PictureBox><Picture /></PictureBox>
                  <DeleteButton>Smazat</DeleteButton>
                </PictureRow>
                <FieldPanel $gap><Field grey label="Název restaurace" value="Watson and Sons" /></FieldPanel>
                <FieldPanel>
                  <FieldBox>
                    <Label htmlFor="about" $grey>Popis</Label>
                    <AreaWrap><Area id="about" defaultValue={about} /><Counter>0 / 4000</Counter></AreaWrap>
                  </FieldBox>
                </FieldPanel>
              </Body>
            </Card>

            <Card $bottom={28}>
              <CardHead icon={<MenuIcon />} title="Jídelní lístek" sub="Uveďte informace o svém menu." star />
              <Rule $thin />
              <SectionHead>
                <SmallFold aria-label="Sbalit sekci"><Down size={15} /></SmallFold>
                <h3>black</h3>
                <Square $tone={c.red} $gap={0} aria-label="Smazat sekci"><Trash /></Square>
                <Square $tone="#94dfaa" $gap={9} aria-label="Nahoru"><Up size={18} /></Square>
                <Square $tone="#94dfaa" $gap={5} aria-label="Dolů"><Down size={18} w={1.2} /></Square>
              </SectionHead>
              <SectionFields>
                <Field label="Název sekce" value="black" required />
                <Field label="Popis" value="Miss bit mention. Along politics street owner. Receive lay provide." />
              </SectionFields>
              <Product>
                <SectionHead $inner>
                  <SmallFold $white aria-label="Sbalit produkt"><Down size={15} /></SmallFold>
                  <h3>plan</h3>
                  <MiniTools>
                    <MiniButton $tone="#94dfaa" aria-label="Nahoru"><Up size={17} /></MiniButton><span />
                    <MiniButton $tone="#94dfaa" aria-label="Dolů"><Down size={17} w={1.2} /></MiniButton><span />
                    <MiniButton $tone={c.red} aria-label="Smazat produkt"><Trash size={16} /></MiniButton>
                  </MiniTools>
                </SectionHead>
                <ProductBody>
                  <Obrazek />
                  <PictureRow $top={14} $bottom={26}>
                    <PictureBox $dashed><Picture /></PictureBox>
                    <DeleteButton><PlainTrash />Smazat</DeleteButton>
                  </PictureRow>
                  <ProductFields>
                    <Pair>
                      <Field label="Název" value="plan" required />
                      <Field label="Přeložený název (volitelné)" value="tend" />
                    </Pair>
                    <Field label="Popis" value="Provide dinner section. Cut sit check middle quality. Mission pay past successful." />
                    <Field label="Cena (volitelné)" value="93" />
                    <Allergens>
                      <legend>Alergeny</legend>
                      <AllergenGrid>
                        {allergens.map((a, i) => (
                          <AllergenTile key={a.name} $on={i === 7}>
                            <AllergenArt bg={a.bg} art={a.art} size={34} />
                            <input type="checkbox" aria-label={a.name} defaultChecked={i === 7} />
                          </AllergenTile>
                        ))}
                      </AllergenGrid>
                    </Allergens>
                  </ProductFields>
                </ProductBody>
              </Product>
              <AddButton $side={36}><PlusBox />Přidat produkt</AddButton>
              <MenuRule $thin />
              <AddButton $side={33}><PlusBox />Přidat sekci</AddButton>
            </Card>

            <Card $bottom={16}>
              <CardHead icon={<Clock />} title="Otevírací doba" sub="Provozní doba pro každý den v týdnu." />
              <Rule />
              <Days>
                {days.map((d, i) => (
                  <Day key={d}>
                    <DayName><Check type="checkbox" />{d}</DayName>
                    {['08:00', '09:00'].map((t, k) => (
                      <TimeBox key={t}>
                        <TimeInput disabled aria-label={`${d} ${k ? 'do' : 'od'}`} placeholder="12:30" defaultValue={i === 0 ? t : ''} />
                        <Clock size={16} w={1.4} />
                      </TimeBox>
                    ))}
                    <MoreButton aria-label={`Přidat čas ${d}`}><Plus size={14} /></MoreButton>
                  </Day>
                ))}
              </Days>
            </Card>

            <Card $bottom={38}>
              <CardHead icon={<InfoIcon />} title="Kontaktní údaje" sub="Uveďte kontaktní údaje." />
              <Rule />
              <ContactList>
                <Contact $open>
                  <ContactHead><h3>Přidat telefon</h3><PlusButton aria-label="Přidat telefon"><Plus /></PlusButton></ContactHead>
                  <ContactRule />
                  <ContactGrid>
                    <TinyLabel htmlFor="tag">Štítek (volitelný)</TinyLabel>
                    <TinyLabels><TinyLabel htmlFor="icon">Ikona</TinyLabel><TinyLabel htmlFor="number">Telefonní číslo</TinyLabel></TinyLabels>
                    <Input id="tag" defaultValue="red" />
                    <PhoneField>
                      <IconSelectWrap>
                        <span><PhoneIcon size={22} /><Down size={11} w={1.6} /></span>
                        <select id="icon" defaultValue="phone"><option value="phone" label=" " /></select>
                      </IconSelectWrap>
                      <BareInput id="number" defaultValue="514-248-2355" />
                    </PhoneField>
                    <Square $tone={c.red} $gap={0} $size={42} aria-label="Smazat telefon"><Trash size={19} /></Square>
                  </ContactGrid>
                </Contact>
                <Contact><ContactHead><h3>Přidat e-mail</h3><PlusButton aria-label="Přidat e-mail"><Plus /></PlusButton></ContactHead></Contact>
                <Contact><ContactHead><h3>Přidat webové stránky</h3><PlusButton aria-label="Přidat webové stránky"><Plus /></PlusButton></ContactHead></Contact>
              </ContactList>
            </Card>

            <Card $bottom={24}>
              <CardHead icon={<GlobeIcon />} title="Sociální sítě" sub="Přidejte si na svou stránku odkazy na sociální sítě." />
              <Rule />
              <SocialPanel>
                {socials.map(s => (
                  <SocialTile key={s.name} aria-label={s.name}><Disc $bg={s.bg} $outline={s.outline} $shape={s.shape}>{s.art}</Disc></SocialTile>
                ))}
              </SocialPanel>
            </Card>

            <Card><CardHead closed icon={<FontIcon />} title="Písmo" sub="Vytvořte si jedinečnou stránku pomocí originálních fontů." /></Card>
            <Card><CardHead closed icon={<FaceIcon />} title="Úvodní obrazovka" sub="Zobrazení obrázku během načítání stránky." /></Card>
            <Card><CardHead closed icon={<QrIcon />} title="Název QR kódu" sub="Pojmenujte svůj QR kód." /></Card>
            <Card><CardHead closed icon={<LockIcon />} title="Heslo" hint /></Card>
          </Stack>
        </Column>

        <Preview>
          <Toggle>
            <ToggleButton $on>Náhled</ToggleButton>
            <ToggleButton>QR kód</ToggleButton>
          </Toggle>
          <PhoneShell>
            <SideKey $y={90} $h={18} /><SideKey $y={124} $h={35} /><SideKey $y={170} $h={36} /><SideKey $right $y={149} $h={54} />
            <Screen>
              <PreviewText>{aboutMobile}</PreviewText>
              <MobileCards>
                <MobileCard $h={60}><MobileLine $h={60} $gap={0}>black<MobileAction><Arrow size={16} /></MobileAction></MobileLine></MobileCard>
                <MobileCard $h={76}>
                  <MobileLine $h={66} $gap={0}>
                    <MobileAllergens><AllergenArt bg={allergens[7].bg} art={allergens[7].art} size={29} /></MobileAllergens>
                  </MobileLine>
                </MobileCard>
                <MobileCard $h={169}>
                  <MobileLine $h={70} $gap={16} $ruled>
                    <MobileIcon><Line size={19} w={1.8}><rect x="1" y="1.500" width="9" height="8" rx="2.500" /><rect x="14" y="1.500" width="9" height="8" rx="2.500" /><rect x="1" y="14" width="9" height="8" rx="2.500" /><rect x="14" y="14" width="9" height="8" rx="2.500" /></Line></MobileIcon>
                    Kontakt
                  </MobileLine>
                  <MobileLine $h={65} $gap={9} $ruled>
                    <MobileIcon $round><PhoneIcon /></MobileIcon>
                    <MobileContact><small>red</small>514-248-2355</MobileContact>
                  </MobileLine>
                </MobileCard>
              </MobileCards>
              <StatusTime>9:41</StatusTime>
              <StatusIcons width="34" height="8" viewBox="0 0 34 8" aria-hidden="true">
                <path d="M0 8V6h1.500v2ZM2.500 8V4.500H4V8ZM5 8V3h1.500v5ZM7.500 8V1H9v7Z" />
                <path d="M12 3c2.500-2.500 6-2.500 8.500 0M13.700 5c1.500-1.400 3.600-1.400 5.100 0" fill="none" stroke="#000" strokeWidth="1.400" /><circle cx="16.200" cy="7" r="1" />
                <rect x="23" y="1" width="10" height="6" rx="1.500" /><rect x="33" y="3" width="1" height="2" />
              </StatusIcons>
              <Island />
              <HomeBar />
            </Screen>
          </PhoneShell>
        </Preview>
      </Main>

      <ActionBar>
        <ActionInner>
          <ActionButton><Arrow back size={19} />Zpět</ActionButton>
          <ActionButton $solid>Další<Arrow size={19} /></ActionButton>
        </ActionInner>
      </ActionBar>
    </Page>
  );
}
